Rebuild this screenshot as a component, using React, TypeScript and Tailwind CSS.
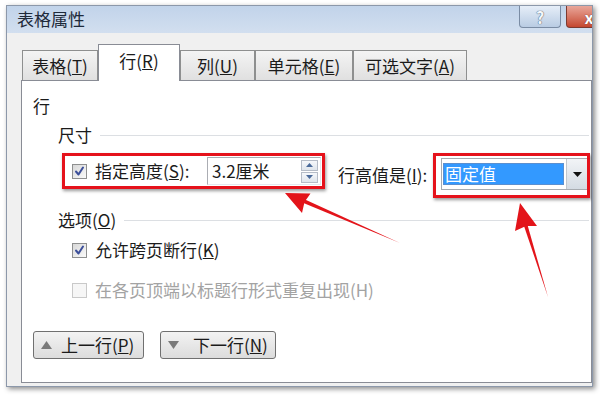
import React from "react";

function Check({ checked, disabled }: { checked?: boolean; disabled?: boolean }) {
  return (
    <span
      className={
        disabled
          ? "w-[15px] h-[15px] border border-[#c9c9c9] bg-[#f6f6f6] flex items-center justify-center shrink-0"
          : "w-[15px] h-[15px] border border-[#8e8f8f] bg-gradient-to-br from-[#d8d8d8] to-[#fafafa] flex items-center justify-center shrink-0 p-[1px]"
      }
    >
      {checked && (
        <svg width="11" height="11" viewBox="0 0 11 11">
          <path d="M2 5.5 L4.5 8.5 L9 1.5" fill="none" stroke="#3c4f9a" strokeWidth="2" strokeLinecap="round" strokeLinejoin="round" />
        </svg>
      )}
    </span>
  );
}

function Tab({ label, k, w, active }: { label: string; k: string; w: string; active?: boolean }) {
  return (
    <div
      className={
        active
          ? `${w} h-[37px] -mb-[1px] relative z-10 bg-white border border-b-0 border-[#898c95] flex items-center justify-center pb-[4px]`
          : `${w} h-[30px] bg-gradient-to-b from-[#f4f4f4] to-[#e0e0e0] border border-b-0 border-[#8e8f8f] flex items-center justify-center pt-[1px]`
      }
    >
      <span>
        {label}(<u>{k}</u>)
      </span>
    </div>
  );
}

export default function App() {
  return (
    <div className="w-[600px] h-[395px] bg-white relative overflow-hidden font-['Noto_Sans_CJK_SC',sans-serif] text-[17px] text-[#1b1b1b]">
      <div className="ml-[6px] mt-[5px] w-[587px] h-[382px] border border-[#8c98aa] bg-[#f0f0f0] flex flex-col overflow-hidden shadow-[2px_2px_5px_rgba(0,0,0,0.45)]">
        {/* title bar */}
        <div className="h-[27px] shrink-0 bg-gradient-to-b from-[#c1d3ea] to-[#d2dfef] flex items-start justify-between">
          <div className="pl-[10px] pt-[1px] leading-[24px] text-[17px] text-[#1e2a3a]">表格属性</div>
          <div className="flex items-start gap-[5px] -mr-[20px]">
            <div className="w-[42px] h-[22px] border border-t-0 border-[#7a8ca4] rounded-b-[4px] bg-gradient-to-b from-[#e6eef8] to-[#b9cce3] flex items-center justify-center">
              <span className="text-[16px] leading-[20px] font-bold text-[#f4f7fb] [text-shadow:0_0_1px_#4d5a6b,0_0_1px_#4d5a6b]">?</span>
            </div>
            <div className="w-[46px] h-[22px] border border-t-0 border-[#7d3a30] rounded-b-[4px] bg-gradient-to-b from-[#e8a69a] to-[#c4462f] flex items-center justify-center">
              <span className="text-[16px] leading-[20px] font-bold text-white [text-shadow:0_0_1px_#5a1a10]">x</span>
            </div>
          </div>
        </div>

        {/* body */}
        <div className="flex-1 flex flex-col pl-[14px] pt-[11px] pb-[3px]">
          <div className="flex items-end pl-[1px] h-[36px] shrink-0">
            <Tab label="表格" k="T" w="w-[76px]" />
            <Tab label="行" k="R" w="w-[82px]" active />
            <Tab label="列" k="U" w="w-[75px]" />
            <Tab label="单元格" k="E" w="w-[98px]" />
            <Tab label="可选文字" k="A" w="w-[114px]" />
          </div>

          <div className="flex-1 bg-white border border-[#898c95] flex flex-col pl-[11px] pt-[15px]">
            <div className="h-[20px] leading-[20px]">行</div>

            <div className="mt-[9px] ml-[25px] h-[20px] flex items-center">
              <span className="leading-[20px]">尺寸</span>
              <div className="flex-1 h-px bg-[#dcdfe3] ml-[8px] mr-[2px]" />
            </div>

            <div className="mt-[8px] ml-[29px] flex items-start">
              <div className="w-[263px] h-[36px] border-[3px] border-[#e5121b] shadow-[1px_2px_3px_rgba(0,0,0,0.4)] flex items-center pl-[7px]">
                <Check checked />
                <span className="ml-[8px] leading-[20px]">
                  指定高度(<u>S</u>):
                </span>
                <div className="ml-auto mr-[1px] w-[114px] h-[28px] border border-[#abadb3] border-r-[#e3e9ef] border-b-[#e3e9ef] bg-white flex items-center pl-[4px]">
                  <span className="leading-[20px]">3.2厘米</span>
                  <div className="ml-auto mr-[2px] flex flex-col gap-[1px]">
                    <div className="w-[17px] h-[11px] border border-[#b5bcc7] bg-gradient-to-b from-[#f6f8fb] to-[#dfe5ec] flex items-center justify-center">
                      <svg width="7" height="4" viewBox="0 0 7 4"><path d="M0 4 L3.5 0 L7 4 Z" fill="#4a6a9a" /></svg>
                    </div>
                    <div className="w-[17px] h-[11px] border border-[#b5bcc7] bg-gradient-to-b from-[#f6f8fb] to-[#dfe5ec] flex items-center justify-center">
                      <svg width="7" height="4" viewBox="0 0 7 4"><path d="M0 0 L3.5 4 L7 0 Z" fill="#4a6a9a" /></svg>
                    </div>
                  </div>
                </div>
              </div>

              <span className="ml-[13px] mt-[12px] w-[89px] leading-[20px] whitespace-nowrap">
                行高值是(<u>I</u>):
              </span>

              <div className="ml-[6px] w-[157px] h-[45px] border-[3px] border-[#e5121b] shadow-[1px_2px_3px_rgba(0,0,0,0.4)] bg-white flex flex-col pl-[5px] pt-[2px]">
                <div className="h-[32px] border border-[#a7abb0] border-r-0 flex items-stretch">
                  <div className="flex-1 flex items-center pl-[2px]">
                    <div className="w-[119px] h-[20px] bg-[#3399ff] text-white leading-[20px] pl-[1px] [box-shadow:0_0_0_1px_#5a8fd0]">固定值</div>
                  </div>
                  <div className="w-[21px] bg-gradient-to-b from-[#f2f4f7] to-[#d4dbe3] border-l border-[#c2c7cd] flex items-center justify-center">
                    <svg width="9" height="5" viewBox="0 0 9 5"><path d="M0 0 L4.5 5 L9 0 Z" fill="#111" /></svg>
                  </div>
                </div>
              </div>
            </div>

            <div className="mt-[12px] ml-[25px] h-[20px] flex items-center">
              <span className="leading-[20px]">
                选项(<u>O</u>)
              </span>
              <div className="flex-1 h-px bg-[#dcdfe3] ml-[8px] mr-[2px]" />
            </div>

            <div className="mt-[10px] ml-[39px] h-[20px] flex items-center">
              <Check checked />
              <span className="ml-[8px] leading-[20px]">
                允许跨页断行(<u>K</u>)
              </span>
            </div>

            <div className="mt-[20px] ml-[39px] h-[20px] flex items-center">
              <Check disabled />
              <span className="ml-[8px] leading-[20px] text-[#a3a3a3]">在各页顶端以标题行形式重复出现(H)</span>
            </div>

            <div className="mt-[31px] flex items-center gap-[16px]">
              <div className="w-[111px] h-[28px] border border-[#707070] rounded-[3px] bg-gradient-to-b from-[#f3f3f3] to-[#dcdcdc] flex items-center pl-[7px]">
                <svg width="11" height="8" viewBox="0 0 11 8"><path d="M0 8 L5.5 0 L11 8 Z" fill="#7a7a7a" /></svg>
                <span className="ml-[9px] leading-[20px]">
                  上一行(<u>P</u>)
                </span>
              </div>
              <div className="w-[116px] h-[28px] border border-[#707070] rounded-[3px] bg-gradient-to-b from-[#f3f3f3] to-[#dcdcdc] flex items-center pl-[7px]">
                <svg width="11" height="8" viewBox="0 0 11 8"><path d="M0 0 L5.5 8 L11 0 Z" fill="#7a7a7a" /></svg>
                <span className="ml-[14px] leading-[20px]">
                  下一行(<u>N</u>)
                </span>
              </div>
            </div>
          </div>
        </div>
      </div>

      {/* annotation arrows */}
      <svg className="absolute left-0 top-0 pointer-events-none" width="600" height="395" viewBox="0 0 600 395">
        <g fill="#e3141a" style={{ filter: "blur(0.4px)" }}>
          <path d="M400 243 L305 199.5 L303.5 203 Z" />
          <path d="M285 193 L310.5 193.5 L304.5 202 L302 213 Z" />
          <path d="M548 297 L524 226 L527.5 225 Z" />
          <path d="M520 203 L537 226 L526 226 L515 231 Z" />
        </g>
      </svg>
    </div>
  );
}
